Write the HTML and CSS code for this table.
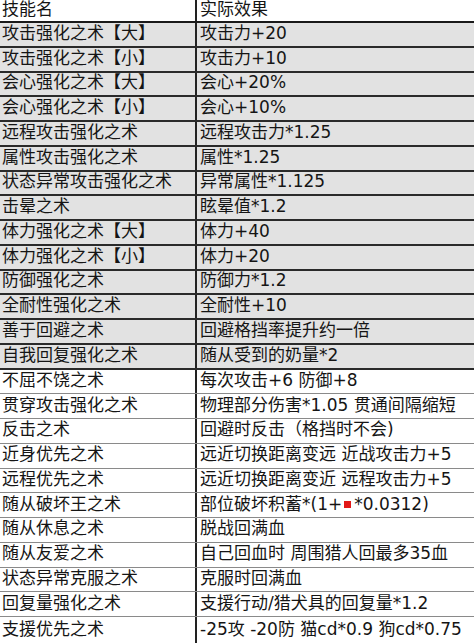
FILE: index.html
```html
<!DOCTYPE html>
<html lang="zh">
<head>
<meta charset="utf-8">
<link rel="stylesheet" href="styles.css">
</head>
<body>
<div class="sheet">
  <div class="row head"><div class="c name">技能名</div><div class="c eff">实际效果</div></div>
  <div class="row grey"><div class="c name">攻击强化之术【大】</div><div class="c eff">攻击力+20</div></div>
  <div class="row grey"><div class="c name">攻击强化之术【小】</div><div class="c eff">攻击力+10</div></div>
  <div class="row grey"><div class="c name">会心强化之术【大】</div><div class="c eff">会心+20%</div></div>
  <div class="row grey"><div class="c name">会心强化之术【小】</div><div class="c eff">会心+10%</div></div>
  <div class="row grey"><div class="c name">远程攻击强化之术</div><div class="c eff">远程攻击力*1.25</div></div>
  <div class="row grey"><div class="c name">属性攻击强化之术</div><div class="c eff">属性*1.25</div></div>
  <div class="row grey"><div class="c name">状态异常攻击强化之术</div><div class="c eff">异常属性*1.125</div></div>
  <div class="row grey"><div class="c name">击晕之术</div><div class="c eff">眩晕值*1.2</div></div>
  <div class="row grey"><div class="c name">体力强化之术【大】</div><div class="c eff">体力+40</div></div>
  <div class="row grey"><div class="c name">体力强化之术【小】</div><div class="c eff">体力+20</div></div>
  <div class="row grey"><div class="c name">防御强化之术</div><div class="c eff">防御力*1.2</div></div>
  <div class="row grey"><div class="c name">全耐性强化之术</div><div class="c eff">全耐性+10</div></div>
  <div class="row grey"><div class="c name">善于回避之术</div><div class="c eff">回避格挡率提升约一倍</div></div>
  <div class="row grey"><div class="c name">自我回复强化之术</div><div class="c eff">随从受到的奶量*2</div></div>
  <div class="row"><div class="c name">不屈不饶之术</div><div class="c eff">每次攻击+6 防御+8</div></div>
  <div class="row"><div class="c name">贯穿攻击强化之术</div><div class="c eff">物理部分伤害*1.05 贯通间隔缩短</div></div>
  <div class="row"><div class="c name">反击之术</div><div class="c eff">回避时反击（格挡时不会)</div></div>
  <div class="row"><div class="c name">近身优先之术</div><div class="c eff">远近切换距离变远 近战攻击力+5</div></div>
  <div class="row"><div class="c name">远程优先之术</div><div class="c eff">远近切换距离变近 远程攻击力+5</div></div>
  <div class="row"><div class="c name">随从破坏王之术</div><div class="c eff">部位破坏积蓄*(1+<span class="red"></span>*0.0312)</div></div>
  <div class="row"><div class="c name">随从休息之术</div><div class="c eff">脱战回满血</div></div>
  <div class="row"><div class="c name">随从友爱之术</div><div class="c eff">自己回血时 周围猎人回最多35血</div></div>
  <div class="row"><div class="c name">状态异常克服之术</div><div class="c eff">克服时回满血</div></div>
  <div class="row"><div class="c name">回复量强化之术</div><div class="c eff">支援行动/猎犬具的回复量*1.2</div></div>
  <div class="row last"><div class="c name">支援优先之术</div><div class="c eff">-25攻 -20防 猫cd*0.9 狗cd*0.75</div></div>
</div>
</body>
</html>
```
FILE: styles.css
```css
html, body {
  margin: 0;
  padding: 0;
  background: #ffffff;
}
body {
  font-family: "DejaVu Sans", "Noto Sans CJK SC", sans-serif;
  font-size: 17px;
  color: #151515;
}
.sheet {
  width: 474px;
  height: 643px;
  overflow: hidden;
  display: flex;
  flex-direction: column;
}
.row {
  display: grid;
  grid-template-columns: 197px 1fr;
  height: 24.75px;
  box-sizing: border-box;
  border-bottom: 1px solid #8a8a8a;
  flex: none;
}
.row.head {
  height: 23px;
  border-bottom: 2px solid #1a1a1a;
}
.row.grey {
  background: #e2e2e2;
  border-bottom: 2px solid #2a2a2a;
}
.row.last {
  height: 26px;
  border-bottom: none;
}
.c {
  display: flex;
  align-items: center;
  padding-left: 2px;
  padding-bottom: 2px;
  white-space: nowrap;
  line-height: 1;
}
.name {
  border-right: 2px solid #222;
}
.eff {
  padding-left: 3px;
}
.red {
  display: inline-block;
  width: 7px;
  height: 7px;
  background: #e2191a;
  margin: 0 3px 0 2px;
  vertical-align: middle;
}
```
